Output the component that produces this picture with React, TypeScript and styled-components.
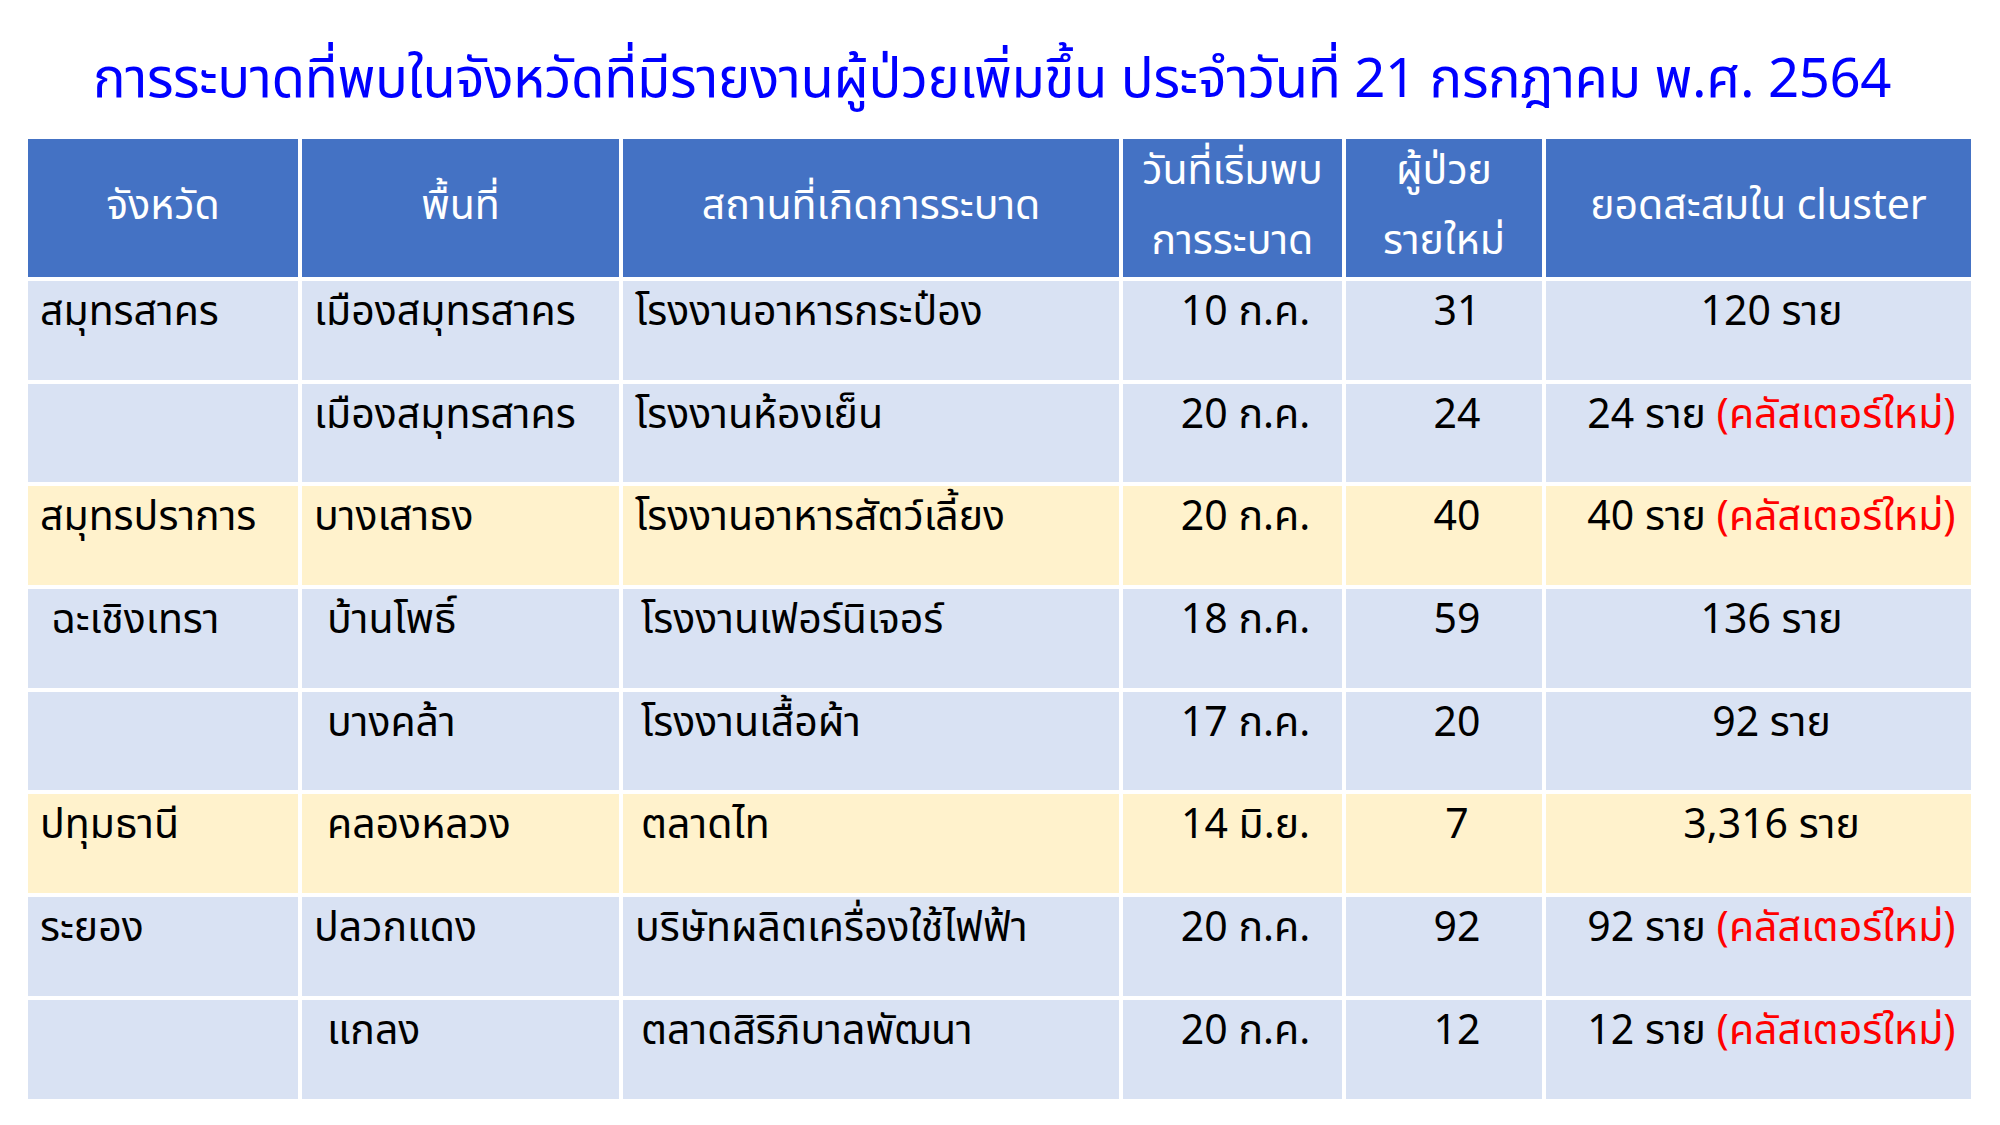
import { createGlobalStyle, styled } from 'styled-components'

const GlobalStyle = createGlobalStyle`
    html, body {
        margin: 0;
        padding: 0;
        background: #fff;
    }
    body {
        font-family: "Noto Sans Thai", "Noto Sans", "DejaVu Sans", sans-serif;
    }
`

type Tone = 'blue' | 'yellow'
type Align = 'left' | 'center'

interface Row {
    province: string
    district: string
    place: string
    date: string
    patients: string
    total: string
    isNew?: boolean
    tone: Tone
    indent?: [number, number, number]
}

const rows: Row[] = [
    { province: 'สมุทรสาคร', district: 'เมืองสมุทรสาคร', place: 'โรงงานอาหารกระป๋อง', date: '10 ก.ค.', patients: '31', total: '120 ราย', tone: 'blue' },
    { province: '', district: 'เมืองสมุทรสาคร', place: 'โรงงานห้องเย็น', date: '20 ก.ค.', patients: '24', total: '24 ราย', isNew: true, tone: 'blue' },
    { province: 'สมุทรปราการ', district: 'บางเสาธง', place: 'โรงงานอาหารสัตว์เลี้ยง', date: '20 ก.ค.', patients: '40', total: '40 ราย', isNew: true, tone: 'yellow' },
    { province: 'ฉะเชิงเทรา', district: 'บ้านโพธิ์', place: 'โรงงานเฟอร์นิเจอร์', date: '18 ก.ค.', patients: '59', total: '136 ราย', tone: 'blue', indent: [23, 25, 18] },
    { province: '', district: 'บางคล้า', place: 'โรงงานเสื้อผ้า', date: '17 ก.ค.', patients: '20', total: '92 ราย', tone: 'blue', indent: [12, 25, 18] },
    { province: 'ปทุมธานี', district: 'คลองหลวง', place: 'ตลาดไท', date: '14 มิ.ย.', patients: '7', total: '3,316 ราย', tone: 'yellow', indent: [12, 25, 18] },
    { province: 'ระยอง', district: 'ปลวกแดง', place: 'บริษัทผลิตเครื่องใช้ไฟฟ้า', date: '20 ก.ค.', patients: '92', total: '92 ราย', isNew: true, tone: 'blue' },
    { province: '', district: 'แกลง', place: 'ตลาดสิริภิบาลพัฒนา', date: '20 ก.ค.', patients: '12', total: '12 ราย', isNew: true, tone: 'blue', indent: [12, 25, 18] },
]

const Page = styled.main`
    width: 2000px;
    padding-top: 37px;
`

const Title = styled.h1`
    margin: 0 0 15px;
    padding-right: 16px;
    text-align: center;
    color: #0000ff;
    font-size: 54.5px;
    font-weight: 400;
    line-height: 87px;
    letter-spacing: -0.4px;
`

const Table = styled.div`
    margin-left: 28px;
    width: 1943px;
    display: grid;
    grid-template-columns: 270px 317px 496px 219px 196px 425px;
    grid-template-rows: 138px repeat(8, 98.7px);
    gap: 4px;
`

const HeadCell = styled.div`
    background: #4472c4;
    color: #fff;
    font-size: 41px;
    line-height: 70px;
    padding-bottom: 5px;
    display: flex;
    flex-direction: column;
    align-items: center;
    justify-content: center;
    text-align: center;
    white-space: nowrap;
`

const Cell = styled.div<{ $tone: Tone; $align?: Align; $indent?: number }>`
    background: ${({ $tone }) => ($tone === 'yellow' ? '#fff2cc' : '#d9e2f3')};
    color: #000;
    font-size: 41px;
    line-height: 1;
    padding: 11px 0 0 ${({ $align, $indent }) => ($align === 'center' ? 26 : $indent ?? 12)}px;
    text-align: ${({ $align }) => $align ?? 'left'};
    white-space: nowrap;
`

const NewTag = styled.span`
    color: #ff0000;
`

const headers: string[][] = [
    ['จังหวัด'],
    ['พื้นที่'],
    ['สถานที่เกิดการระบาด'],
    ['วันที่เริ่มพบ', 'การระบาด'],
    ['ผู้ป่วย', 'รายใหม่'],
    ['ยอดสะสมใน cluster'],
]

export default function App() {
    return (
        <Page>
            <GlobalStyle />
            <Title>การระบาดที่พบในจังหวัดที่มีรายงานผู้ป่วยเพิ่มขึ้น ประจำวันที่ 21 กรกฎาคม พ.ศ. 2564</Title>
            <Table>
                {headers.map((lines) => (
                    <HeadCell key={lines.join()}>
                        {lines.map((line) => (
                            <span key={line}>{line}</span>
                        ))}
                    </HeadCell>
                ))}
                {rows.map((row, i) => (
                    <Row key={i} row={row} />
                ))}
            </Table>
        </Page>
    )
}

function Row({ row }: { row: Row }) {
    const indent = row.indent ?? [12, 12, 12]
    return (
        <>
            <Cell $tone={row.tone} $indent={indent[0]}>{row.province}</Cell>
            <Cell $tone={row.tone} $indent={indent[1]}>{row.district}</Cell>
            <Cell $tone={row.tone} $indent={indent[2]}>{row.place}</Cell>
            <Cell $tone={row.tone} $align="center">{row.date}</Cell>
            <Cell $tone={row.tone} $align="center">{row.patients}</Cell>
            <Cell $tone={row.tone} $align="center">
                {row.total}
                {row.isNew && <NewTag> (คลัสเตอร์ใหม่)</NewTag>}
            </Cell>
        </>
    )
}
